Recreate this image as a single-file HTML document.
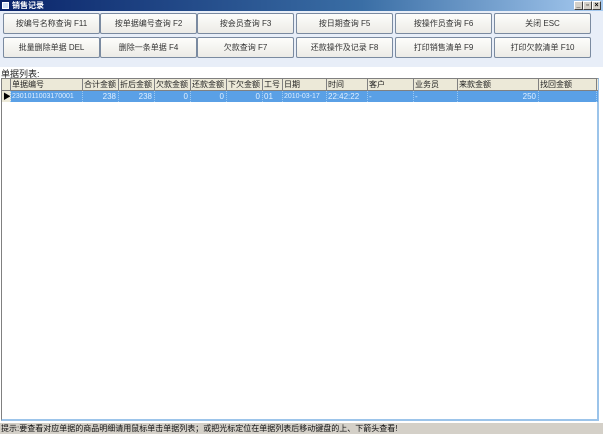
<!DOCTYPE html><html><head><meta charset="utf-8"><style>
*{margin:0;padding:0;box-sizing:border-box}
body{width:603px;height:438px;background:#fff;font-family:"Liberation Sans","Noto Sans CJK SC",sans-serif;font-size:9px;color:#222;position:relative;overflow:hidden}
.title{position:absolute;left:0;top:0;width:603px;height:11px;background:linear-gradient(90deg,#0a246a,#3a6ea5 60%,#a6caf0);color:#fff;font-weight:bold;font-size:8px;line-height:11px;padding-left:12px}
.title i{position:absolute;left:2px;top:2px;width:7px;height:7px;background:#cfe0f5;border:1px solid #fff}
.ctl{position:absolute;top:1px;width:9px;height:9px;background:#d4d0c8;border:1px solid #fff;border-right-color:#404040;border-bottom-color:#404040;font-size:7px;line-height:7px;text-align:center;color:#000}
.bg{position:absolute;left:0;top:11px;width:603px;height:56px;background:#e8eef8}
.btn{position:absolute;height:21px;width:97px;background:linear-gradient(#fdfdfb,#ecebe6);border:1px solid #7a8aa0;border-radius:2px;text-align:center;line-height:19px;font-size:8px;color:#333}
.lbl{position:absolute;left:1px;top:67px;font-size:9px}
.tbl{position:absolute;left:1px;top:78px;width:598px;height:343px;border:1px solid #808080;border-bottom:2px solid #9cc4ea;border-right:2px solid #9cc4ea;background:#fff;font-size:8px}
.hdr{position:absolute;left:0;top:0;height:12px;width:596px;background:#ece9d8;border-bottom:1px solid #808080}
.c{position:absolute;top:0;height:12px;border-right:1px solid #808080;line-height:12px;padding-left:1px;white-space:nowrap;overflow:hidden}
.row{position:absolute;left:0;top:12px;height:11px;width:596px;background:#5aa0e6;color:#dfefff}
.row .c{height:11px;line-height:11px;border-right:1px dotted #9cc8f0}
.r{text-align:right;padding-right:2px}
.status{position:absolute;left:0;top:423px;width:603px;height:11px;background:#d4d0c8;font-size:8px;line-height:11px;padding-left:1px;color:#111}
</style></head><body>
<div class="title"><i></i>销售记录
<div class="ctl" style="left:574px">_</div><div class="ctl" style="left:583px">▫</div><div class="ctl" style="left:592px">×</div></div>
<div class="bg"></div>
<div class="btn" style="left:3px;top:13px">按编号名称查询 F11</div>
<div class="btn" style="left:100px;top:13px">按单据编号查询 F2</div>
<div class="btn" style="left:197px;top:13px">按会员查询 F3</div>
<div class="btn" style="left:296px;top:13px">按日期查询 F5</div>
<div class="btn" style="left:395px;top:13px">按操作员查询 F6</div>
<div class="btn" style="left:494px;top:13px">关闭 ESC</div>
<div class="btn" style="left:3px;top:37px">批量删除单据 DEL</div>
<div class="btn" style="left:100px;top:37px">删除一条单据 F4</div>
<div class="btn" style="left:197px;top:37px">欠款查询 F7</div>
<div class="btn" style="left:296px;top:37px">还款操作及记录 F8</div>
<div class="btn" style="left:395px;top:37px">打印销售清单 F9</div>
<div class="btn" style="left:494px;top:37px">打印欠款清单 F10</div>
<div class="lbl">单据列表:</div>
<div class="tbl">
<div class="hdr">
<div class="c" style="left:0;width:9px"></div>
<div class="c" style="left:9px;width:72px">单据编号</div>
<div class="c" style="left:81px;width:36px">合计金额</div>
<div class="c" style="left:117px;width:36px">折后金额</div>
<div class="c" style="left:153px;width:36px">欠款金额</div>
<div class="c" style="left:189px;width:36px">还款金额</div>
<div class="c" style="left:225px;width:36px">下欠金额</div>
<div class="c" style="left:261px;width:20px">工号</div>
<div class="c" style="left:281px;width:44px">日期</div>
<div class="c" style="left:325px;width:41px">时间</div>
<div class="c" style="left:366px;width:46px">客户</div>
<div class="c" style="left:412px;width:44px">业务员</div>
<div class="c" style="left:456px;width:81px">来款金额</div>
<div class="c" style="left:537px;width:58px">找回金额</div>
</div>
<div class="row">
<div class="c" style="left:0;width:9px;background:#ece9d8;color:#000">▶</div>
<div class="c" style="left:9px;width:72px;font-size:7px">2301011003170001</div>
<div class="c r" style="left:81px;width:36px">238</div>
<div class="c r" style="left:117px;width:36px">238</div>
<div class="c r" style="left:153px;width:36px">0</div>
<div class="c r" style="left:189px;width:36px">0</div>
<div class="c r" style="left:225px;width:36px">0</div>
<div class="c" style="left:261px;width:20px">01</div>
<div class="c" style="left:281px;width:44px;font-size:7px">2010-03-17</div>
<div class="c" style="left:325px;width:41px">22:42:22</div>
<div class="c" style="left:366px;width:46px">-</div>
<div class="c" style="left:412px;width:44px">-</div>
<div class="c r" style="left:456px;width:81px">250</div>
<div class="c" style="left:537px;width:58px"></div>
</div>
</div>
<div class="status">提示:要查看对应单据的商品明细请用鼠标单击单据列表；或把光标定位在单据列表后移动键盘的上、下箭头查看!</div>
</body></html>
